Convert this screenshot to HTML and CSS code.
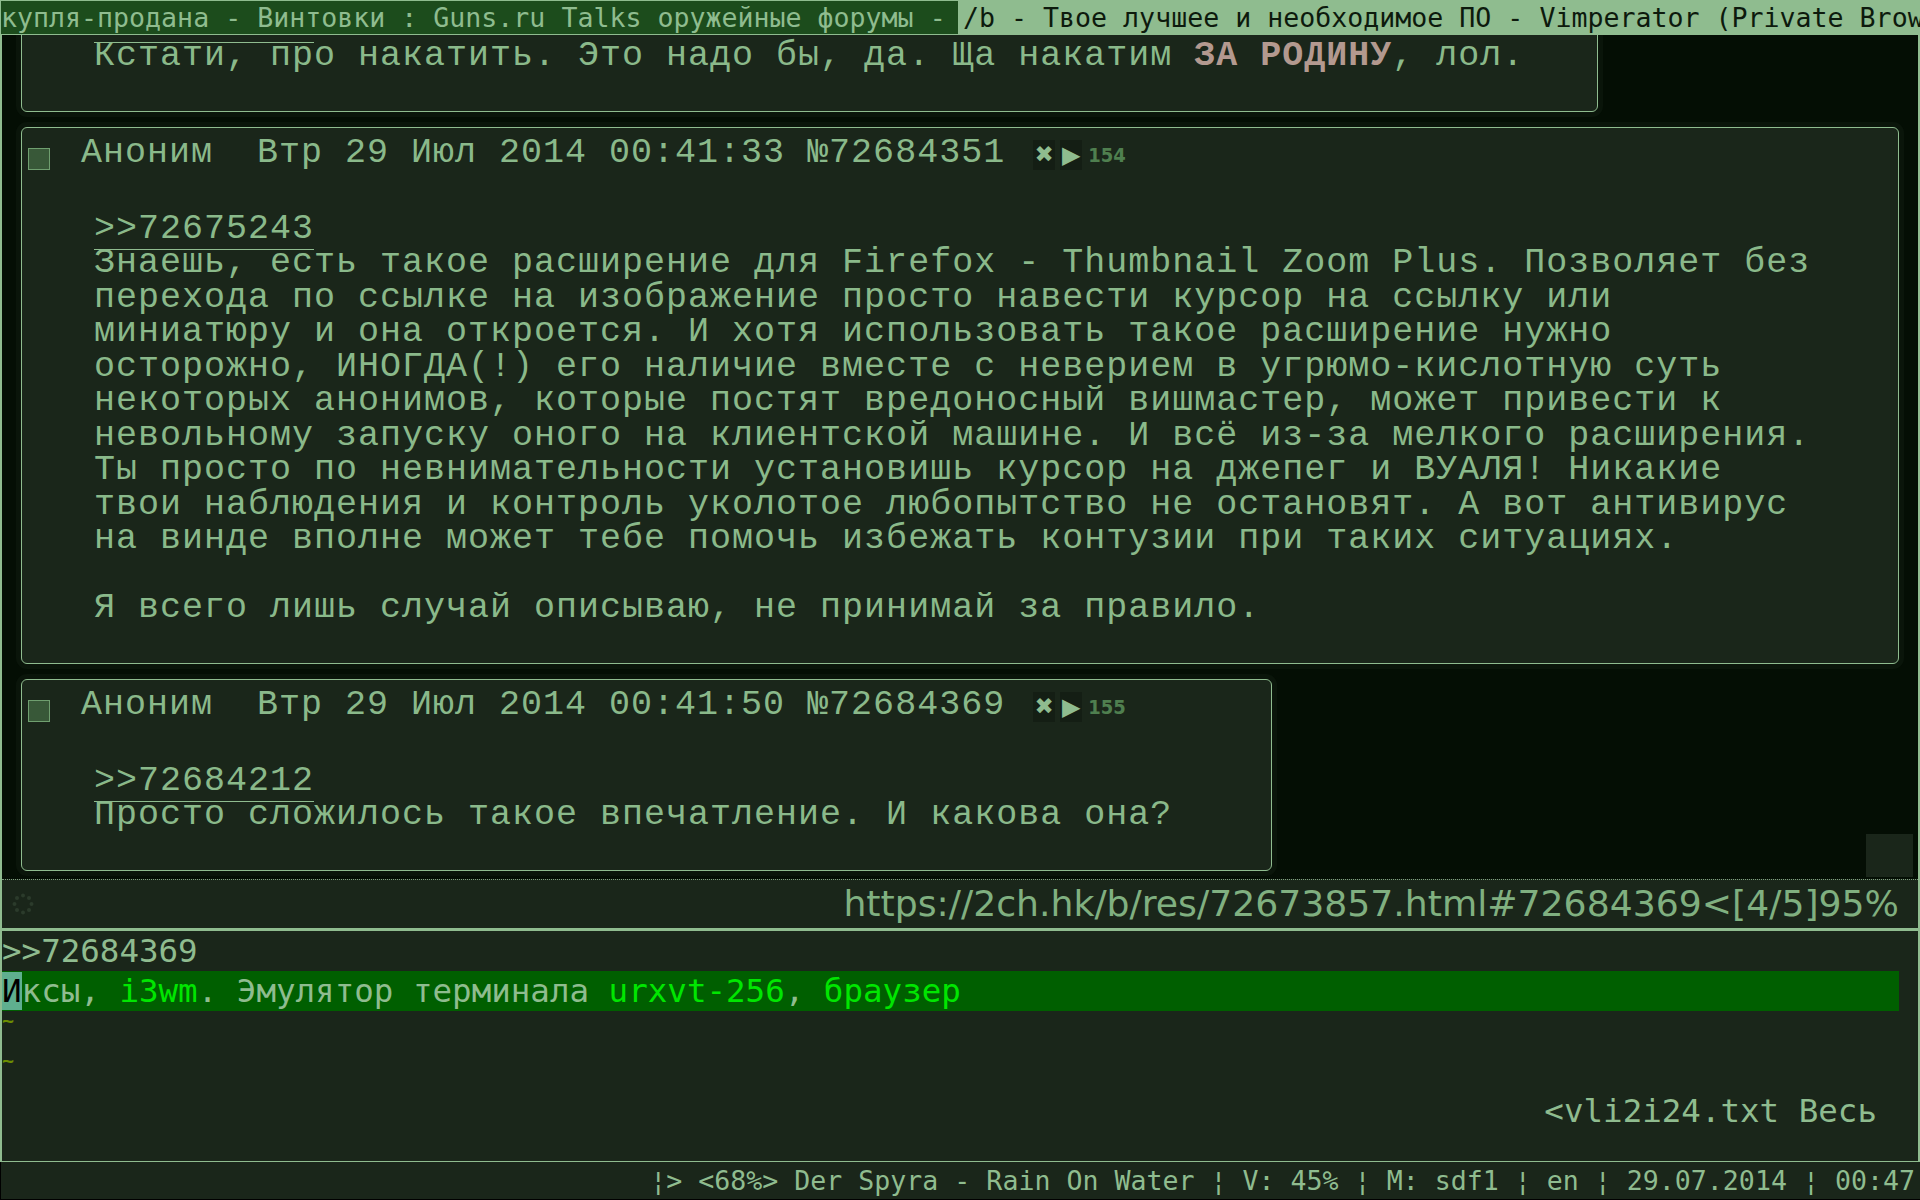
FILE: index.html
```html
<!DOCTYPE html>
<html lang="ru">
<head>
<meta charset="utf-8">
<title>/b - Твое лучшее и необходимое ПО - Vimperator</title>
<link rel="stylesheet" href="styles.css">
</head>
<body>
<div class="screen">
  <header class="tabs">
    <div class="tab tab-current">купля-продана - Винтовки : Guns.ru Talks оружейные форумы -</div>
    <div class="tab tab-other">/b - Твое лучшее и необходимое ПО - Vimperator (Private Browsing)</div>
  </header>

  <section class="browser">
    <div class="page">
      <article class="post post-first">
        <blockquote class="post-body">
          <span class="link-rule"></span><br>
          Кстати, про накатить. Это надо бы, да. Ща накатим <strong class="strong">ЗА РОДИНУ</strong>, лол.
        </blockquote>
      </article>

      <article class="post post-wide">
        <div class="post-head">
          <span class="checkbox"></span>
          <span class="post-meta">Аноним  Втр 29 Июл 2014 00:41:33 №72684351</span>
          <span class="post-tools">
            <span class="tool">✖</span>
            <span class="tool tool-play">▶</span>
            <span class="replies">154</span>
          </span>
        </div>
        <blockquote class="post-body">
          <a class="reply-link">&gt;&gt;72675243</a><br>
          Знаешь, есть такое расширение для Firefox - Thumbnail Zoom Plus. Позволяет без<br>
          перехода по ссылке на изображение просто навести курсор на ссылку или<br>
          миниатюру и она откроется. И хотя использовать такое расширение нужно<br>
          осторожно, ИНОГДА(!) его наличие вместе с неверием в угрюмо-кислотную суть<br>
          некоторых анонимов, которые постят вредоносный вишмастер, может привести к<br>
          невольному запуску оного на клиентской машине. И всё из-за мелкого расширения.<br>
          Ты просто по невнимательности установишь курсор на джепег и ВУАЛЯ! Никакие<br>
          твои наблюдения и контроль уколотое любопытство не остановят. А вот антивирус<br>
          на винде вполне может тебе помочь избежать контузии при таких ситуациях.<br>
          <br>
          Я всего лишь случай описываю, не принимай за правило.
        </blockquote>
      </article>

      <article class="post post-last">
        <div class="post-head">
          <span class="checkbox"></span>
          <span class="post-meta">Аноним  Втр 29 Июл 2014 00:41:50 №72684369</span>
          <span class="post-tools">
            <span class="tool">✖</span>
            <span class="tool tool-play">▶</span>
            <span class="replies">155</span>
          </span>
        </div>
        <blockquote class="post-body">
          <a class="reply-link">&gt;&gt;72684212</a><br>
          Просто сложилось такое впечатление. И какова она?
        </blockquote>
      </article>

      <div class="scroll-thumb"></div>
    </div>

    <div class="statusline">
      <svg class="spinner" width="22" height="22" viewBox="0 0 22 22">
        <g fill="#2b3b2b">
          <circle cx="11" cy="2.5" r="2"/>
          <circle cx="17" cy="5" r="2"/>
          <circle cx="19.5" cy="11" r="2"/>
          <circle cx="17" cy="17" r="2"/>
          <circle cx="11" cy="19.5" r="2"/>
          <circle cx="5" cy="17" r="2"/>
          <circle cx="2.5" cy="11" r="2"/>
          <circle cx="5" cy="5" r="2"/>
        </g>
      </svg>
      <span class="url">https://2ch.hk/b/res/72673857.html#72684369&lt;[4/5]95%</span>
    </div>
  </section>

  <section class="editor">
    <div class="row">&gt;&gt;72684369</div>
    <div class="row row-cursorline"><span class="cursor">И</span>ксы, <span class="hl">i3wm</span>. Эмулятор терминала <span class="hl">urxvt-256</span>, <span class="hl">браузер</span></div>
    <div class="row row-tilde"><span class="tilde">~</span></div>
    <div class="row row-tilde"><span class="tilde">~</span></div>
    <div class="row row-ruler">&lt;vli2i24.txt Весь</div>
    <div class="row"></div>
  </section>

  <footer class="bar">¦&gt; &lt;68%&gt; Der Spyra - Rain On Water ¦ V: 45% ¦ M: sdf1 ¦ en ¦ 29.07.2014 ¦ 00:47</footer>
</div>
</body>
</html>
```

FILE: styles.css
```css
* {
  box-sizing: border-box;
  margin: 0;
  padding: 0;
}

html,
body {
  width: 1920px;
  height: 1200px;
  overflow: hidden;
  background: #1a261a;
}

.screen {
  display: flex;
  flex-direction: column;
  width: 1920px;
  height: 1200px;
}

/* ---------- i3 tab bar ---------- */
.tabs {
  display: flex;
  height: 35px;
  flex: none;
  font-family: "DejaVu Sans Mono", monospace;
  font-size: 26.6px;
  line-height: 33px;
  white-space: nowrap;
}

.tab {
  flex: 1 1 0;
  overflow: hidden;
}

.tab-current {
  background: #1c4c1c;
  color: #8fbc8f;
  border: 1px solid #8fbc8f;
}

.tab-other {
  background: #8fbc8f;
  color: #0d1a0d;
  padding: 1px 0 0 4px;
}

/* ---------- browser window ---------- */
.browser {
  display: flex;
  flex-direction: column;
  height: 896px;
  flex: none;
  border: 2px solid #8fbc8f;
  border-top: 0;
  border-bottom-width: 3px;
}

.page {
  position: relative;
  height: 844px;
  flex: none;
  overflow: hidden;
  background: #040e04;
  padding: 0 19px;
  display: flex;
  flex-direction: column;
  align-items: flex-start;
  gap: 15px;
}

.post {
  flex: none;
  background: #1a261a;
  border: 1px solid #8fbc8f;
  border-radius: 6px;
  box-shadow: 0 0 0 5px #0a150a;
  font-family: "Liberation Mono", monospace;
  font-size: 35px;
  letter-spacing: 1px;
  color: #8ab98a;
  padding-top: 7px;
}

.post-first {
  width: 1577px;
  margin-top: -31.5px;
  padding-top: 0;
}

.post-first .post-body {
  margin-top: 0;
}

.post-wide {
  width: 100%;
}

.post-last {
  width: 1251px;
}

.post-head {
  display: flex;
  align-items: flex-start;
  height: 36px;
  line-height: 36px;
  white-space: pre;
}

.checkbox {
  width: 22px;
  height: 22px;
  margin: 13px 0 0 6px;
  background: #385838;
  border: 1px solid #6f9f6f;
  flex: none;
}

.post-meta {
  margin-left: 31px;
}

.post-tools {
  display: flex;
  align-items: center;
  align-self: center;
  margin-left: 28px;
  margin-top: 4px;
  letter-spacing: 0;
}

.tool {
  width: 22px;
  height: 30px;
  margin-right: 5px;
  background: #141e14;
  display: flex;
  align-items: center;
  justify-content: center;
  font-family: "DejaVu Sans", sans-serif;
  font-size: 23px;
  line-height: 1;
  color: #8fbc8f;
}

.tool-play {
  margin-right: 6px;
  font-size: 24px;
}

.replies {
  font-family: "DejaVu Sans Condensed", "DejaVu Sans", sans-serif;
  font-weight: bold;
  font-size: 20px;
  line-height: 1;
  color: #4f7f4f;
}

.post-body {
  margin: 41px 40px 37px 72px;
  line-height: 34.5px;
}

.reply-link {
  color: inherit;
  text-decoration: none;
  border-bottom: 1px solid #8fbc8f;
}

/* underline of a reply link whose text has scrolled out of view */
.link-rule {
  padding-left: 220px;
  border-bottom: 1px solid #8fbc8f;
}

.strong {
  color: #b3998f;
  font-weight: bold;
}

.scroll-thumb {
  position: absolute;
  right: 5px;
  bottom: 2px;
  width: 47px;
  height: 43px;
  background: #1a261a;
}

/* ---------- vimperator status line ---------- */
.statusline {
  height: 49px;
  flex: none;
  border-top: 1px dotted #7f9f7f;
  background: #1a261a;
  display: flex;
  align-items: center;
  padding: 0 19px 0 10px;
}

.spinner {
  flex: none;
}

.url {
  margin-left: auto;
  font-family: "DejaVu Sans", sans-serif;
  font-size: 36.2px;
  line-height: 48px;
  color: #80b080;
  white-space: nowrap;
}

/* ---------- urxvt / vim ---------- */
.editor {
  height: 231px;
  flex: none;
  overflow: hidden;
  background: #1a261a;
  border-left: 2px solid #8fbc8f;
  border-right: 2px solid #8fbc8f;
  border-bottom: 1px solid #8fbc8f;
  font-family: "DejaVu Sans Mono", monospace;
  font-size: 32.5px;
  color: #8fbc8f;
}

.row {
  height: 40px;
  line-height: 40px;
  white-space: pre;
}

.row-cursorline {
  background: #005f00;
  margin-right: 19px;
}

.cursor {
  background: #5faf8f;
  color: #000;
}

.hl {
  color: #00e600;
}

.row-tilde {
  font-size: 20px;
  font-weight: bold;
  line-height: 18px;
}

.tilde {
  color: #6b8e00;
}

.row-ruler {
  text-align: right;
  padding-right: 41px;
}

/* ---------- i3bar ---------- */
.bar {
  height: 38px;
  flex: none;
  background: #1a261a;
  border-left: 1px solid #000;
  border-bottom: 1px solid #000;
  text-align: right;
  padding-right: 5px;
  font-family: "DejaVu Sans Mono", monospace;
  font-size: 26.6px;
  line-height: 37px;
  color: #8fbc8f;
  white-space: pre;
}
```
